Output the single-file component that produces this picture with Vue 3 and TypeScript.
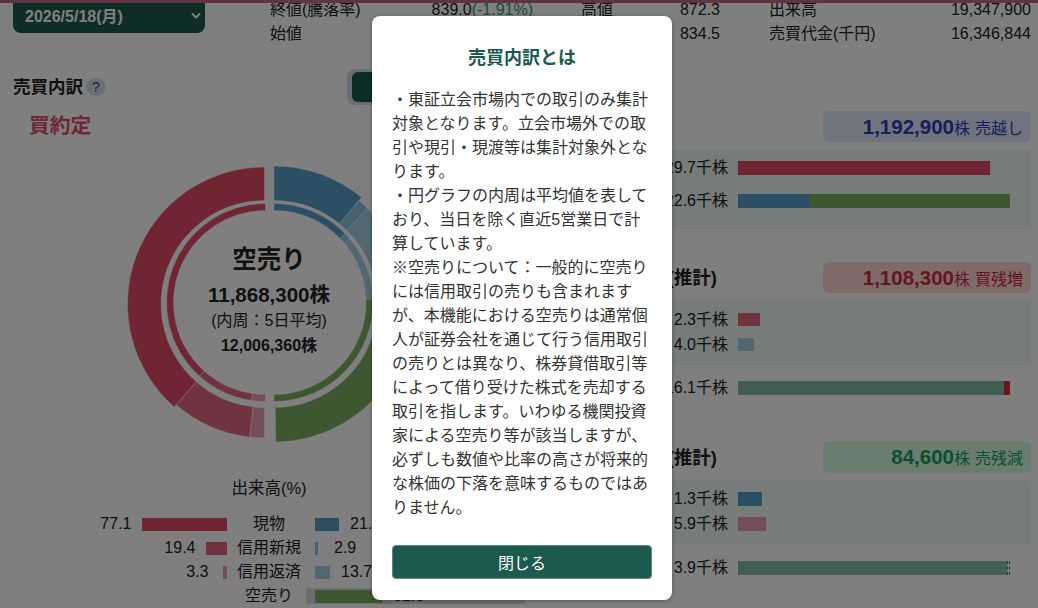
<script setup lang="ts">
interface Wedge { cx: number; cy: number; r0: number; r1: number; a0: number; a1: number; fill: string }

const RED = '#e04a66', RED2 = '#e06880', RED3 = '#e89cb0'
const BLUE = '#5a9ec8', BLUE2 = '#8cc4e0', BLUE3 = '#a6cfe2', GREEN = '#7eae62'

const L = 140.5, R = 150, C = 145
const IL = 141.5, IR = 150, IC = 143.5

const wedges: Wedge[] = [
  { cx: L, cy: C, r0: 103.5, r1: 137, a0: 0, a1: -138.8, fill: RED },
  { cx: L, cy: C, r0: 103.5, r1: 134, a0: -138.8, a1: -173.7, fill: RED2 },
  { cx: L, cy: C, r0: 103.5, r1: 134, a0: -173.7, a1: -180, fill: RED3 },
  { cx: R, cy: C, r0: 103.5, r1: 138, a0: 0, a1: 39.4, fill: BLUE },
  { cx: R, cy: C, r0: 103.5, r1: 134, a0: 39.4, a1: 44.6, fill: BLUE2 },
  { cx: R, cy: C, r0: 103.5, r1: 134, a0: 44.6, a1: 69.3, fill: BLUE3 },
  { cx: R, cy: C, r0: 103.5, r1: 138, a0: 69.3, a1: 179.3, fill: GREEN },
  { cx: IL, cy: IC, r0: 92, r1: 99, a0: 0, a1: -138, fill: RED },
  { cx: IL, cy: IC, r0: 92, r1: 99, a0: -138, a1: -172, fill: RED2 },
  { cx: IL, cy: IC, r0: 92, r1: 99, a0: -172, a1: -180, fill: RED3 },
  { cx: IR, cy: IC, r0: 92, r1: 99, a0: 0, a1: 46, fill: BLUE },
  { cx: IR, cy: IC, r0: 92, r1: 99, a0: 46, a1: 50, fill: BLUE2 },
  { cx: IR, cy: IC, r0: 92, r1: 99, a0: 50, a1: 88, fill: BLUE3 },
  { cx: IR, cy: IC, r0: 92, r1: 99, a0: 88, a1: 180, fill: GREEN },
]

function pt(w: Wedge, r: number, a: number): string {
  const t = (a * Math.PI) / 180
  return `${(w.cx + r * Math.sin(t)).toFixed(2)} ${(w.cy - r * Math.cos(t)).toFixed(2)}`
}

function arc(w: Wedge): string {
  const sweep = w.a1 > w.a0 ? 1 : 0
  const back = sweep ? 0 : 1
  return `M${pt(w, w.r1, w.a0)}A${w.r1} ${w.r1} 0 0 ${sweep} ${pt(w, w.r1, w.a1)}L${pt(w, w.r0, w.a1)}A${w.r0} ${w.r0} 0 0 ${back} ${pt(w, w.r0, w.a0)}Z`
}

const volumeRows = [
  { name: '現物', left: 77.1, right: 21.9, lc: RED, rc: BLUE },
  { name: '信用新規', left: 19.4, right: 2.9, lc: RED2, rc: BLUE2 },
  { name: '信用返済', left: 3.3, right: 13.7, lc: RED3, rc: BLUE3 },
]
const barW = (v: number) => `${Math.round(v * 1.1)}px`
</script>

<template>
  <div class="page">
    <div class="topline"></div>

    <header class="head">
      <div class="select">
        <span>2026/5/18(月)</span>
        <svg class="chev" width="10" height="7" viewBox="0 0 10 7"><path d="M1 1.5 5 5.5 9 1.5" fill="none" stroke="#fff" stroke-width="2" /></svg>
      </div>
      <div class="quote">
        <span class="c1">終値(騰落率)</span><span class="c2">839.0<em>(-1.91%)</em></span>
        <span class="c3">高値</span><span class="c4">872.3</span>
        <span class="c5">出来高</span><span class="c6">19,347,900</span>
        <span class="c1">始値</span><span class="c2">852.0</span>
        <span class="c3">安値</span><span class="c4">834.5</span>
        <span class="c5">売買代金(千円)</span><span class="c6">16,346,844</span>
      </div>
    </header>

    <div class="section-head">
      <h2>売買内訳</h2>
      <span class="help">?</span>
      <div class="toggle"><span class="on">全体の売買内訳</span><span>個別</span></div>
    </div>

    <main class="content">
      <section class="left">
        <div class="kind">買約定</div>
        <div class="donut">
          <svg width="290" height="290" viewBox="0 0 290 290">
            <path v-for="(w, i) in wedges" :key="i" :d="arc(w)" :fill="w.fill" stroke="#fff" stroke-width="0.5" />
          </svg>
          <div class="donut-text">
            <b class="d1">空売り</b>
            <b class="d2">11,868,300株</b>
            <span class="d3">(内周：5日平均)</span>
            <b class="d4">12,006,360株</b>
          </div>
        </div>
        <div class="vol-title">出来高(%)</div>
        <div v-for="r in volumeRows" :key="r.name" class="vol-row">
          <div class="vol-l"><span>{{ r.left }}</span><div class="holder"><i :style="{ width: barW(r.left), background: r.lc }"></i></div></div>
          <div class="vol-n">{{ r.name }}</div>
          <div class="vol-r"><div class="holder"><i :style="{ width: barW(r.right), background: r.rc }"></i></div><span>{{ r.right }}</span></div>
        </div>
        <div class="vol-row">
          <div class="vol-l"></div>
          <div class="vol-n">空売り</div>
          <div class="vol-r short"><div class="holder"><i :style="{ width: barW(61.3), background: GREEN }"></i></div><span>61.3</span></div>
        </div>
      </section>

      <section class="right">
        <div class="block b1">
          <div class="block-head">
            <h3></h3>
            <div class="badge blue"><b>1,192,900</b>株 <span>売越し</span></div>
          </div>
          <div class="panel first">
            <div class="row"><label>1,029.7千株</label><div class="bar"><i class="red" style="width:252px"></i></div></div>
            <div class="row"><label>822.6千株</label><div class="bar"><i class="blu" style="width:72px"></i><i class="grn" style="width:200px"></i></div></div>
          </div>
        </div>

        <div class="block b2">
          <div class="block-head">
            <h3>信用買残増減(推計)</h3>
            <div class="badge pink"><b>1,108,300</b>株 <span>買残増</span></div>
          </div>
          <div class="panel">
            <div class="row"><label>2.3千株</label><div class="bar"><i class="red2" style="width:22px"></i></div></div>
            <div class="row"><label>4.0千株</label><div class="bar"><i class="blu2" style="width:16px"></i></div></div>
          </div>
          <div class="row outer"><label>1,116.1千株</label><div class="bar"><i class="teal" style="width:266px"></i><i class="dark" style="width:6px"></i></div></div>
        </div>

        <div class="block b3">
          <div class="block-head">
            <h3>信用売残増減(推計)</h3>
            <div class="badge mint"><b>84,600</b>株 <span>売残減</span></div>
          </div>
          <div class="panel tight">
            <div class="row"><label>1.3千株</label><div class="bar"><i class="blu" style="width:24px"></i></div></div>
            <div class="row"><label>5.9千株</label><div class="bar"><i class="red3" style="width:28px"></i></div></div>
          </div>
          <div class="row outer"><label>3.9千株</label><div class="bar"><i class="teal" style="width:269px"></i><i class="dash"></i></div></div>
        </div>
      </section>
    </main>

    <div class="overlay">
      <div class="modal">
        <h4>売買内訳とは</h4>
        <p>
          ・東証立会市場内での取引のみ集計対象となります。立会市場外での取引や現引・現渡等は集計対象外となります。<br />
          ・円グラフの内周は平均値を表しており、当日を除く直近5営業日で計算しています。<br />
          ※空売りについて：一般的に空売りには信用取引の売りも含まれますが、本機能における空売りは通常個人が証券会社を通じて行う信用取引の売りとは異なり、株券貸借取引等によって借り受けた株式を売却する取引を指します。いわゆる機関投資家による空売り等が該当しますが、必ずしも数値や比率の高さが将来的な株価の下落を意味するものではありません。
        </p>
        <button type="button">閉じる</button>
      </div>
    </div>
  </div>
</template>

<style scoped>
.page {
  position: relative;
  width: 1038px;
  height: 608px;
  overflow: hidden;
  background: #fff;
  color: #222;
  font-family: "Liberation Sans", "Noto Sans CJK JP", sans-serif;
  font-size: 16px;
}
.topline { position: absolute; left: 0; right: 0; top: 0; height: 3px; background: #c06880; z-index: 1; }

.head { display: flex; margin-top: -3px; padding-left: 13px; }
.select {
  width: 192px; height: 36px; box-sizing: border-box; padding: 0 4px 0 12px;
  display: flex; align-items: center; justify-content: space-between;
  background: #1b5a4c; color: #fff; font-weight: 700; border-radius: 0 0 8px 8px;
}
.chev { flex: none; }
.quote {
  margin-left: 65px; padding-top: 1px; display: grid; line-height: 24px;
  grid-template-columns: 150px 113px 98px 89px 161px 150px;
}
.quote em { font-style: normal; color: #2f9c74; }
.c2, .c4, .c6 { text-align: right; }
.c3 { padding-left: 48px; }
.c5 { padding-left: 49px; }

.section-head { display: flex; align-items: center; height: 36px; margin-top: 23px; padding-left: 13px; }
.section-head h2 { margin: 0; padding-bottom: 3px; font-size: 17.5px; font-weight: 700; }
.help {
  width: 20px; height: 18px; margin-left: 3px; border-radius: 50%;
  display: flex; align-items: center; justify-content: center;
  background: #d8dce8; color: #2a4a66; font-size: 14px;
}
.toggle {
  margin-left: 241px; padding: 3px 5px; display: flex; gap: 4px;
  background: #d4d8e8; border-radius: 8px;
}
.toggle span { width: 150px; height: 30px; line-height: 30px; text-align: center; white-space: nowrap; }
.toggle .on { box-sizing: border-box; padding-left: 19px; text-align: left; background: #1b5a4c; color: #fff; border-radius: 6px; }

.content { display: flex; }
.left { width: 538px; flex: none; }
.kind { margin-top: 9px; padding-left: 29px; line-height: 24px; font-size: 20.8px; font-weight: 700; color: #dc4f6a; }
.donut { position: relative; width: 290px; height: 290px; margin: 21px auto 0; }
.donut svg { display: block; }
.donut-text {
  position: absolute; inset: 0; display: flex; flex-direction: column;
  align-items: center; justify-content: flex-start; padding-top: 85px; box-sizing: border-box;
}
.d1 { font-size: 24.5px; line-height: 32px; }
.d2 { font-size: 20.5px; line-height: 28px; margin-top: 5px; }
.d3 { line-height: 22px; margin-top: 1px; }
.d4 { line-height: 24px; margin-top: 2px; }
.vol-title { margin-top: 27px; line-height: 24px; text-align: center; font-size: 16.5px; }
.vol-row { display: grid; grid-template-columns: 227px 84px 1fr; height: 24px; align-items: center; line-height: 24px; }
.vol-title + .vol-row { margin-top: 12px; }
.vol-l, .vol-r { display: flex; align-items: center; gap: 11px; }
.vol-l { justify-content: flex-end; gap: 10.5px; }
.vol-r { padding-left: 4px; }
.holder { display: flex; min-width: 8px; }
.vol-l .holder { justify-content: flex-end; }
.holder i { display: block; height: 13px; }
.vol-n { text-align: center; white-space: nowrap; }
.short { position: relative; height: 16px; }
.short::before { content: ""; position: absolute; left: -5px; width: 219px; top: 0; bottom: 0; background: #ddd; }
.short .holder, .short span { position: relative; }

.right { flex: 1; margin-right: 7px; padding-top: 6px; }
.block-head { display: flex; align-items: center; justify-content: space-between; height: 31px; }
.block-head h3 { margin: 0; padding-bottom: 3px; width: 179px; text-align: right; font-size: 18.5px; font-weight: 700; white-space: nowrap; }
.badge {
  width: 208px; height: 100%; box-sizing: border-box; padding-right: 8px;
  display: flex; align-items: center; justify-content: flex-end;
  border-radius: 6px; white-space: nowrap;
}
.badge b { font-size: 20.5px; }
.badge span { margin-left: 5px; }
.blue { background: #e0e8fb; color: #2c40b8; }
.pink { background: #ffd4d4; color: #c82e38; }
.mint { background: #d4fbe0; color: #18a058; }
.panel {
  margin-top: 8px; height: 64px; box-sizing: border-box; padding-top: 6.5px;
  background: #ecf8f2; display: flex; flex-direction: column; gap: 1px;
}
.panel.first { height: 79px; padding-top: 6px; gap: 9px; }
.panel.tight { padding-top: 6px; }
.b2 { margin-top: 33px; }
.b3 { margin-top: 41px; }
.b3 .block-head { height: 32px; }
.row { display: flex; align-items: center; gap: 10px; height: 24px; line-height: 24px; }
.row label { width: 190px; text-align: right; white-space: nowrap; }
.bar { display: flex; }
.bar i { display: block; height: 13.5px; }
.outer { margin-top: 11px; }
.red { background: #e04a66; }
.red2 { background: #e06880; }
.red3 { background: #e89cb0; }
.blu { background: #5a9ec8; }
.blu2 { background: #a6cfe2; }
.grn { background: #7eae62; }
.teal { background: #84bca6; }
.dark { background: #e02c34; }
.dash { width: 1px; border-left: 1px dashed #1e8a60; border-right: 1px dashed #1e8a60; }

.overlay {
  position: absolute; inset: 0; z-index: 2; background: rgba(0, 0, 0, 0.5);
  display: flex; justify-content: flex-start; align-items: flex-start; padding: 16px 0 0 372px; box-sizing: border-box;
}
.modal {
  width: 300px; height: 584px; box-sizing: border-box; padding: 28px 20px 21px;
  background: #fff; border-radius: 8px; box-shadow: 0 1px 4px rgba(0, 0, 0, 0.3);
  display: flex; flex-direction: column;
}
.modal h4 { margin: 0; text-align: center; font-size: 18px; line-height: 28px; font-weight: 700; color: #1b5a4c; }
.modal p { margin: 16px 0 0; line-height: 24px; color: #333; }
.modal button {
  margin-top: auto; height: 34px; border: 1px solid #5a8a7c; border-radius: 4px;
  background: #1b5a4c; color: #fff; font: inherit; padding: 0;
}
</style>
